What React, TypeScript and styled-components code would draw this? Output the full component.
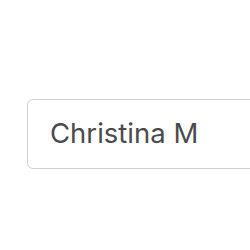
import React from "react";
import styled, { createGlobalStyle } from "styled-components";

const Global = createGlobalStyle`
  html, body { margin: 0; padding: 0; background: #fff; overflow: hidden; }
`;

const Page = styled.div`
  width: 250px;
  height: 250px;
  padding: 99px 0 0 27px;
  box-sizing: border-box;
  overflow: hidden;
`;

const Field = styled.div`
  box-sizing: border-box;
  width: 300px;
  height: 70px;
  border: 1px solid #d2d2d4;
  border-radius: 6px;
  display: flex;
  align-items: center;
  padding: 0 0 3px 22px;
  font-family: Inter, "Noto Sans", sans-serif;
  font-size: 27.5px;
  color: #4a4a4c;
  white-space: nowrap;
`;

export default function App() {
  return (
    <>
      <Global />
      <Page>
        <Field>Christina M</Field>
      </Page>
    </>
  );
}
